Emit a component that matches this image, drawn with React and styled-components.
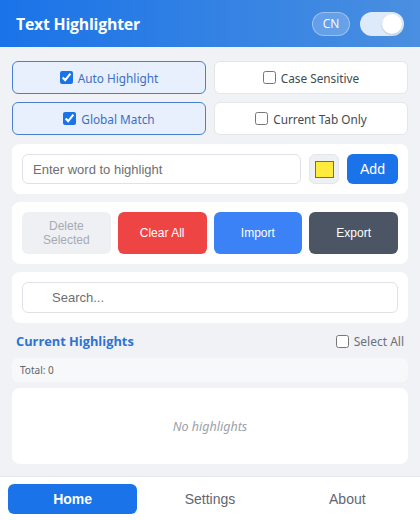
import React from 'react'
import styled, { createGlobalStyle } from 'styled-components'

const GlobalStyle = createGlobalStyle`
  * { box-sizing: border-box; }
  html, body { margin: 0; padding: 0; }
  body {
    width: 420px;
    height: 520px;
    overflow: hidden;
    background: #f0f2f5;
    font-family: "Liberation Sans", Arial, sans-serif;
  }
`

const Page = styled.div`
  display: flex;
  flex-direction: column;
  width: 420px;
  height: 520px;
  background: #f0f2f5;
`

const Header = styled.header`
  display: flex;
  align-items: center;
  justify-content: space-between;
  height: 47px;
  padding: 0 16px;
  background: linear-gradient(90deg, #1a73e8 0%, #4a8fe0 100%);
`

const Title = styled.h1`
  margin: 0;
  font-family: "Open Sans", sans-serif;
  font-size: 15.8px;
  font-weight: 700;
  color: #fff;
  letter-spacing: -0.2px;
`

const HeaderTools = styled.div`
  display: flex;
  align-items: center;
  gap: 10px;
`

const LangPill = styled.button`
  width: 38px;
  height: 24px;
  padding: 0;
  border-radius: 12px;
  border: 1px solid rgba(255, 255, 255, 0.35);
  background: rgba(255, 255, 255, 0.2);
  color: #fff;
  font-family: "Open Sans", sans-serif;
  font-size: 12px;
`

const Toggle = styled.div`
  display: flex;
  align-items: center;
  justify-content: ${p => (p.$on ? 'flex-end' : 'flex-start')};
  width: 44px;
  height: 24px;
  padding: 2px;
  border-radius: 12px;
  background: rgba(255, 255, 255, 0.82);
`

const Knob = styled.div`
  width: 20px;
  height: 20px;
  border-radius: 50%;
  background: #fff;
  box-shadow: 0 1px 2px rgba(0, 0, 0, 0.15);
`

const Main = styled.main`
  flex: 1;
  display: flex;
  flex-direction: column;
  gap: 8px;
  padding: 14px 12px 0;
`

const OptionGrid = styled.div`
  display: grid;
  grid-template-columns: 1fr 1fr;
  column-gap: 8px;
  row-gap: 8px;
  margin-bottom: 1px;
`

const Option = styled.label`
  display: flex;
  align-items: center;
  justify-content: center;
  gap: 5px;
  height: 33px;
  border-radius: 6px;
  border: 1px solid ${p => (p.$active ? '#4a7fcf' : '#e3e6ea')};
  background: ${p => (p.$active ? '#e8f0fe' : '#fff')};
  color: ${p => (p.$active ? '#3a6fc4' : '#444a52')};
  font-family: "Noto Sans", sans-serif;
  font-size: 11.8px;
`

const Check = styled.input.attrs({ type: 'checkbox' })`
  margin: 0;
  width: 13px;
  height: 13px;
  accent-color: #1a73e8;
`

const Card = styled.section`
  display: flex;
  align-items: center;
  gap: ${p => p.$gap || 8}px;
  padding: 10px;
  background: #fff;
  border-radius: 8px;
`

const TextInput = styled.input`
  flex: 1;
  height: ${p => p.$height || 30}px;
  padding: 0 10px;
  border: 1px solid #dfe2e6;
  border-radius: 6px;
  font-family: "Liberation Sans", Arial, sans-serif;
  font-size: 13px;
  color: #333;
  padding-left: ${p => p.$indent || 10}px;
  &::placeholder { color: #6b6f75; }
`

const Swatch = styled.button`
  display: flex;
  align-items: center;
  justify-content: center;
  width: 30px;
  height: 30px;
  padding: 0;
  border: 1px solid #e4e6ea;
  border-radius: 6px;
  background: #eef0f3;
`

const SwatchColor = styled.span`
  width: 19px;
  height: 17px;
  background: #ffeb3b;
  border: 1px solid #7a6f3a;
`

const AddButton = styled.button`
  width: 51px;
  height: 30px;
  border: none;
  border-radius: 6px;
  background: #1a73e8;
  color: #fff;
  font-family: "Liberation Sans", Arial, sans-serif;
  font-size: 14px;
`

const ActionButton = styled.button`
  flex: 1;
  height: 42px;
  padding: 0 4px;
  border: none;
  border-radius: 6px;
  background: ${p => p.$bg};
  color: ${p => p.$color || '#fff'};
  font-family: "Liberation Sans", Arial, sans-serif;
  font-size: 12px;
  line-height: 14px;
`

const ListHeader = styled.div`
  display: flex;
  align-items: center;
  justify-content: space-between;
  height: 20px;
  padding: 0 4px;
`

const ListTitle = styled.h2`
  margin: 0;
  font-family: "Open Sans", sans-serif;
  font-size: 12.8px;
  font-weight: 700;
  color: #2e72d2;
`

const SelectAll = styled.label`
  display: flex;
  align-items: center;
  gap: 5px;
  font-family: "Noto Sans", sans-serif;
  font-size: 12px;
  color: #6b7079;
`

const TotalBar = styled.div`
  height: 24px;
  padding: 0 8px;
  display: flex;
  align-items: center;
  margin-top: -1px;
  background: #f7f8fa;
  border-radius: 6px;
  font-family: "Noto Sans", sans-serif;
  font-size: 10px;
  color: #5f646b;
`

const EmptyList = styled.div`
  display: flex;
  align-items: center;
  justify-content: center;
  height: 76px;
  margin-top: -2px;
  background: #fff;
  border-radius: 8px;
  font-family: "Noto Sans", sans-serif;
  font-style: italic;
  font-size: 12.5px;
  color: #9aa0aa;
`

const Nav = styled.nav`
  display: grid;
  grid-template-columns: repeat(3, 1fr);
  gap: 8px;
  height: 44px;
  padding: 7px 8px;
  background: #fff;
  border-top: 1px solid #e6e8eb;
`

const NavItem = styled.button`
  height: 30px;
  border: none;
  border-radius: 6px;
  background: ${p => (p.$active ? '#1a73e8' : 'transparent')};
  color: ${p => (p.$active ? '#fff' : '#5f6670')};
  font-family: "Liberation Sans", Arial, sans-serif;
  font-size: 14px;
  font-weight: ${p => (p.$active ? 700 : 400)};
`

const options = [
  { label: 'Auto Highlight', on: true },
  { label: 'Case Sensitive', on: false },
  { label: 'Global Match', on: true },
  { label: 'Current Tab Only', on: false }
]

const App = () =>
  <Page>
    <GlobalStyle/>
    <Header>
      <Title>Text Highlighter</Title>
      <HeaderTools>
        <LangPill>CN</LangPill>
        <Toggle $on><Knob/></Toggle>
      </HeaderTools>
    </Header>
    <Main>
      <OptionGrid>
        {options.map(o =>
          <Option key={o.label} $active={o.on}>
            <Check defaultChecked={o.on}/>
            {o.label}
          </Option>
        )}
      </OptionGrid>
      <Card>
        <TextInput placeholder="Enter word to highlight"/>
        <Swatch><SwatchColor/></Swatch>
        <AddButton>Add</AddButton>
      </Card>
      <Card $gap={7}>
        <ActionButton $bg="#eef0f4" $color="#a6abb3">Delete<br/>Selected</ActionButton>
        <ActionButton $bg="#ef4444">Clear All</ActionButton>
        <ActionButton $bg="#3b82f6">Import</ActionButton>
        <ActionButton $bg="#4b5563">Export</ActionButton>
      </Card>
      <Card>
        <TextInput placeholder="Search..." $indent={29} $height={31}/>
      </Card>
      <ListHeader>
        <ListTitle>Current Highlights</ListTitle>
        <SelectAll><Check/>Select All</SelectAll>
      </ListHeader>
      <TotalBar>Total: 0</TotalBar>
      <EmptyList>No highlights</EmptyList>
    </Main>
    <Nav>
      <NavItem $active>Home</NavItem>
      <NavItem>Settings</NavItem>
      <NavItem>About</NavItem>
    </Nav>
  </Page>

export default App
